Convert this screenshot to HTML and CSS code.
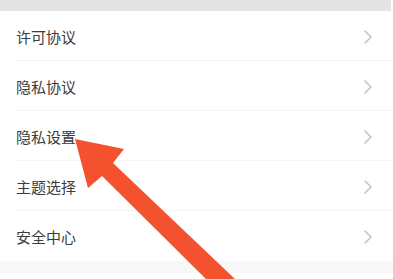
FILE: index.html
```html
<!DOCTYPE html>
<html lang="zh">
<head>
<meta charset="utf-8">
<link rel="stylesheet" href="styles.css">
</head>
<body>
<div class="page">
  <div class="topbar"></div>
  <ul class="list">
    <li class="row"><span class="label">许可协议</span><svg class="chev" viewBox="0 0 8 14"><path d="M1 1 L7 7 L1 13" /></svg></li>
    <li class="row"><span class="label">隐私协议</span><svg class="chev" viewBox="0 0 8 14"><path d="M1 1 L7 7 L1 13" /></svg></li>
    <li class="row"><span class="label">隐私设置</span><svg class="chev" viewBox="0 0 8 14"><path d="M1 1 L7 7 L1 13" /></svg></li>
    <li class="row"><span class="label">主题选择</span><svg class="chev" viewBox="0 0 8 14"><path d="M1 1 L7 7 L1 13" /></svg></li>
    <li class="row"><span class="label">安全中心</span><svg class="chev" viewBox="0 0 8 14"><path d="M1 1 L7 7 L1 13" /></svg></li>
  </ul>
  <div class="footer"></div>
  <svg class="arrow" viewBox="0 0 393 279" width="393" height="279">
    <polygon points="75,139 124,149 113,163 236,280 207,280 102,176 88,188" />
  </svg>
</div>
</body>
</html>
```
FILE: styles.css
```css
html, body {
  margin: 0;
  padding: 0;
  background: #ffffff;
}
.page {
  position: relative;
  width: 393px;
  height: 279px;
  overflow: hidden;
  font-family: "Noto Sans CJK SC", "Noto Sans", sans-serif;
}
.topbar {
  height: 11px;
  margin-right: 2px;
  background: #e4e4e4;
}
.list {
  list-style: none;
  margin: 0;
  padding: 0 0 0 16px;
}
.row {
  height: 50px;
  display: flex;
  align-items: center;
  justify-content: space-between;
  padding-right: 21px;
  border-bottom: 1px solid #f4f4f4;
  box-sizing: border-box;
  padding-top: 2px;
}
.row:last-child {
  border-bottom: none;
}
.label {
  font-size: 15px;
  color: #3c3c3c;
  line-height: 20px;
}
.chev {
  width: 8px;
  height: 14px;
  fill: none;
  stroke: #c4c4c4;
  stroke-width: 1.6;
  stroke-linecap: round;
  stroke-linejoin: round;
}
.footer {
  height: 12px;
  background: #f8f8f8;
}
.arrow {
  position: absolute;
  left: 0;
  top: 0;
  fill: #f4512f;
}
```
